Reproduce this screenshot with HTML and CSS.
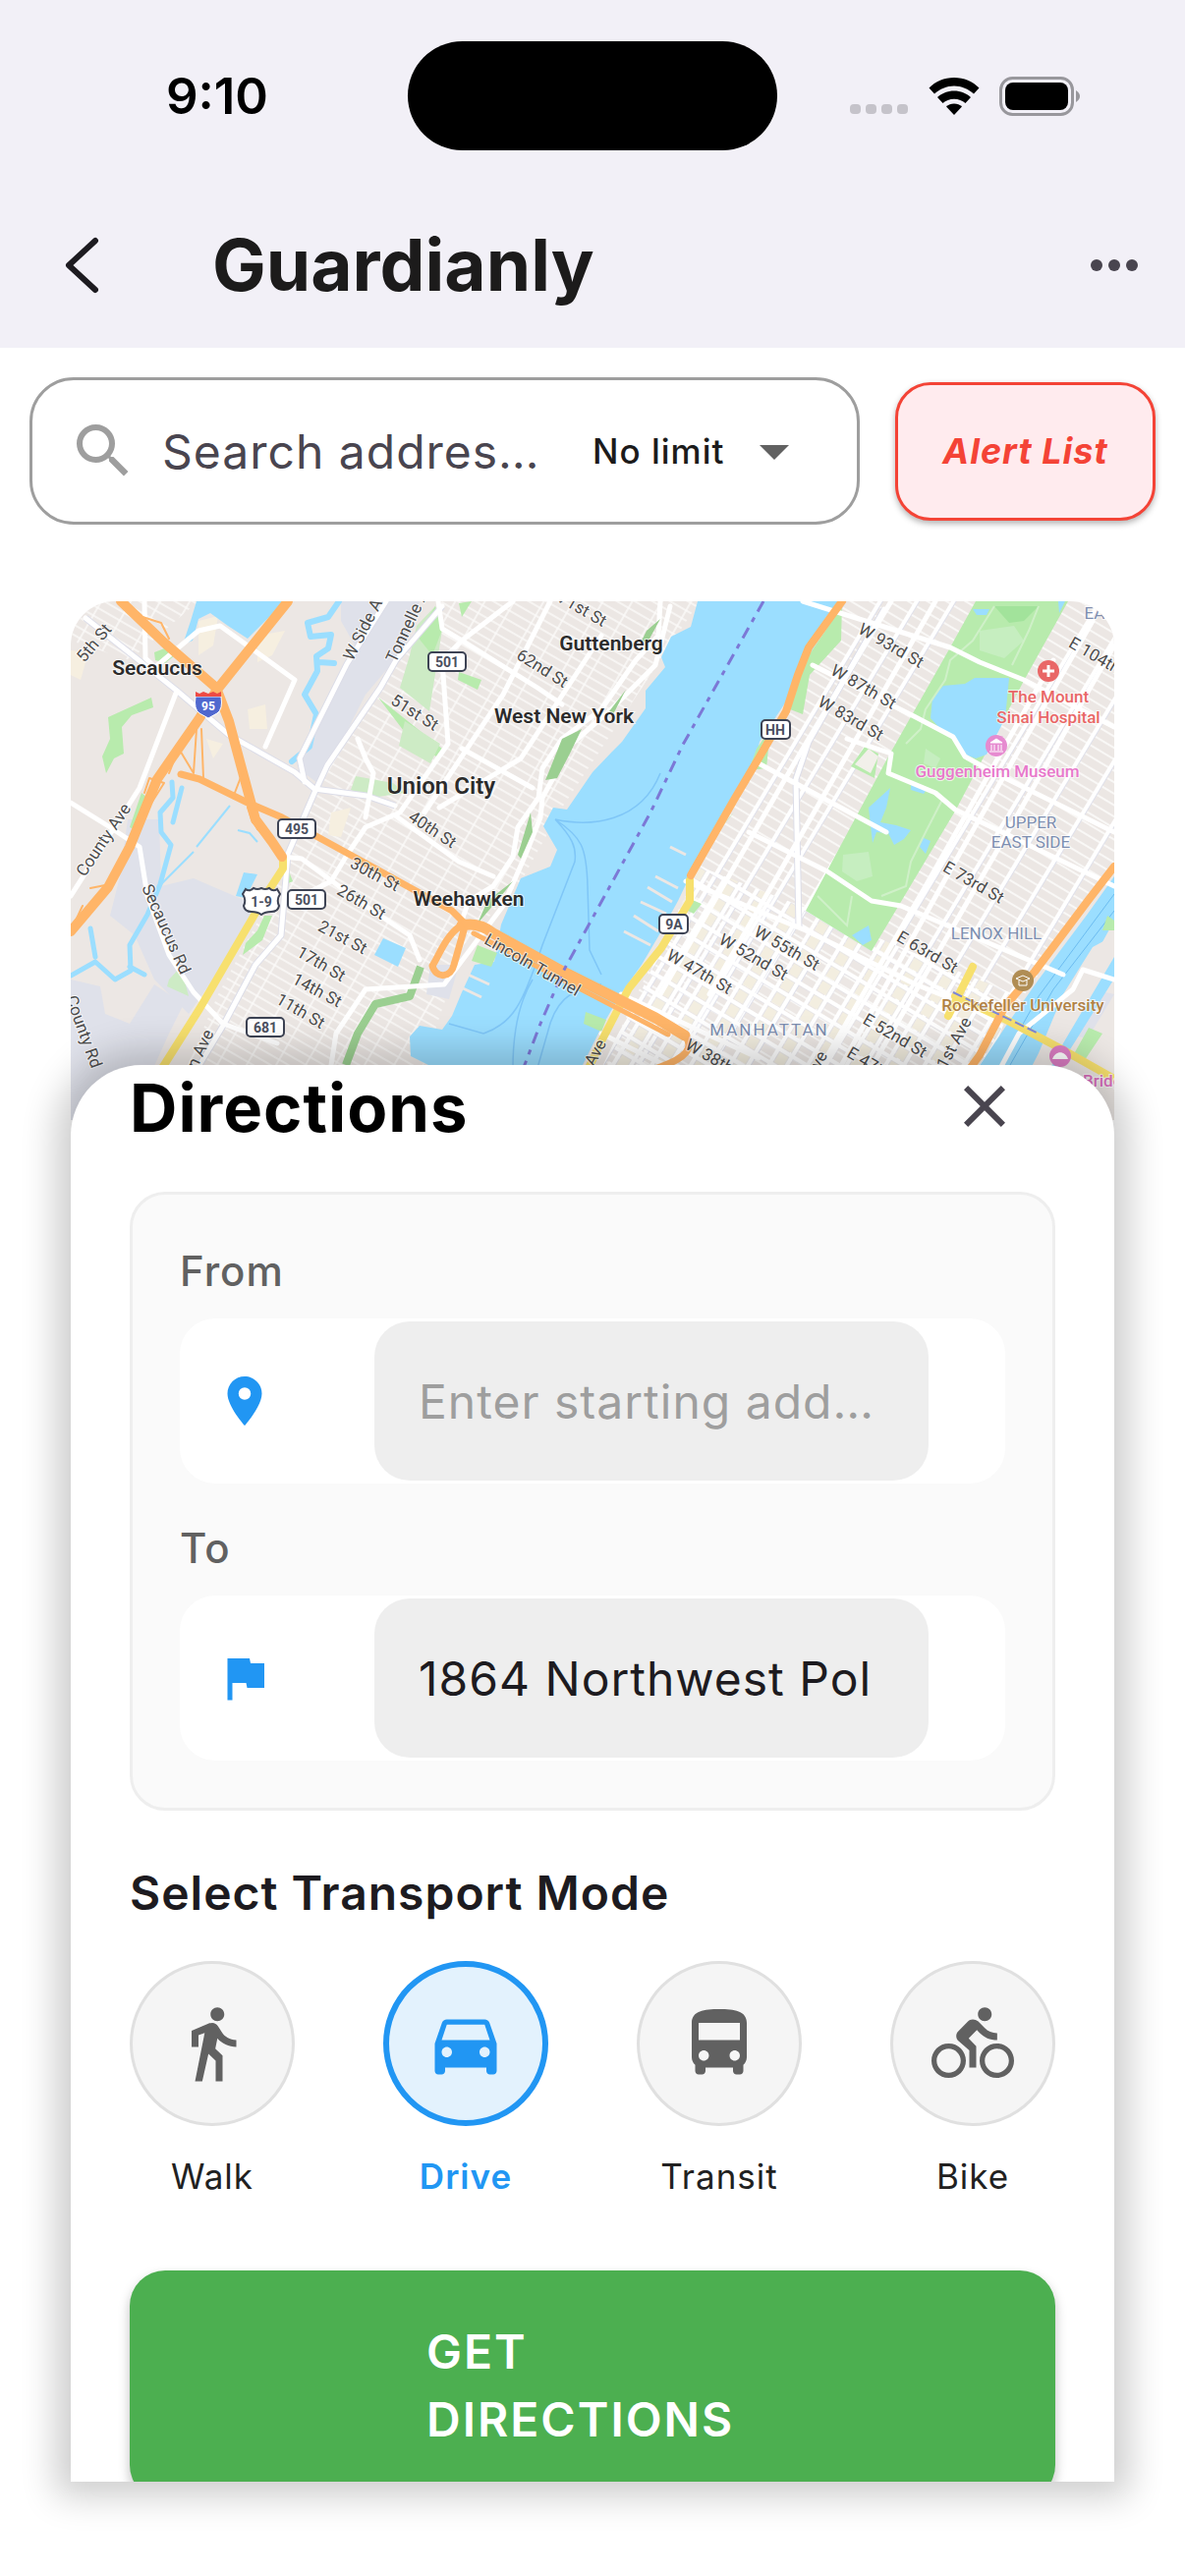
FILE: index.html
```html
<!DOCTYPE html>
<html lang="en">
<head>
    <meta charset="UTF-8">
    <meta name="viewport" content="width=device-width, initial-scale=1.0">
    <title>Guardianly</title>
    <link rel="stylesheet" href="styles.css">
</head>
<body>
    <header class="top">
        <div class="status-bar">
            <span class="time">9:10</span>
            <div class="island"></div>
            <div class="status-icons">
                <svg width="60" height="40" viewBox="0 0 60 40" fill="#c5c3ca">
                    <rect x="0" y="28" width="11" height="10" rx="4"/>
                    <rect x="16" y="28" width="11" height="10" rx="4"/>
                    <rect x="32" y="28" width="11" height="10" rx="4"/>
                    <rect x="48" y="28" width="11" height="10" rx="4"/>
                </svg>
                <svg width="52" height="40" viewBox="0 0 52 40">
                    <path d="M26 1C16 1 7 5 0.500 11.500L6 17.500C11.500 12.500 18.500 9.500 26 9.500S40.500 12.500 46 17.500L51.500 11.500C45 5 36 1 26 1Z"/>
                    <path d="M26 14.500C19.500 14.500 13.500 17 9 21L14.500 27C17.500 24.500 21.500 22.800 26 22.800S34.500 24.500 37.500 27L43 21C38.500 17 32.500 14.500 26 14.500Z"/>
                    <path d="M26 27.500C23 27.500 20 28.700 18 30.500L26 39L34 30.500C32 28.700 29 27.500 26 27.500Z"/>
                </svg>
                <svg width="82" height="40" viewBox="0 0 82 40">
                    <rect x="1.500" y="1.500" width="73" height="37" rx="12" fill="none" stroke="#98979c" stroke-width="3"/>
                    <rect x="6" y="6" width="64" height="28" rx="8"/>
                    <path d="M78 14C81 16 82 18 82 20S81 24 78 26Z" fill="#98979c"/>
                </svg>
            </div>
        </div>
        <div class="app-bar">
            <button class="icon-button" aria-label="Back">
                <svg width="72" height="72" viewBox="0 0 72 72" fill="none" stroke="#1d1b20" stroke-width="6" stroke-linecap="round" stroke-linejoin="round">
                    <path d="M49 11L22 36L49 61"/>
                </svg>
            </button>
            <h1>Guardianly</h1>
            <button class="icon-button" aria-label="More">
                <svg width="60" height="72" viewBox="0 0 60 72" fill="#49454f">
                    <circle cx="12" cy="36" r="6"/>
                    <circle cx="30" cy="36" r="6"/>
                    <circle cx="48" cy="36" r="6"/>
                </svg>
            </button>
        </div>
    </header>

    <div class="search-row">
        <div class="search-box">
            <svg width="72" height="72" viewBox="0 0 24 24" fill="#9e9e9e">
                <path d="M15.500 14h-.79l-.28-.27A6.471 6.471 0 0 0 16 9.500 6.500 6.500 0 1 0 9.500 16c1.610 0 3.090-.59 4.230-1.570l.27.28v.79l5 4.990L20.490 19l-4.990-5zm-6 0C7.010 14 5 11.990 5 9.500S7.010 5 9.500 5 14 7.010 14 9.500 11.990 14 9.500 14z"/>
            </svg>
            <input type="text" aria-label="Search address" placeholder="Search addres…">
            <select aria-label="Distance limit">
                <option>No limit</option>
            </select>
            <svg class="arrow" width="72" height="72" viewBox="0 0 24 24" fill="#616161">
                <path d="M7 10l5 5 5-5z"/>
            </svg>
        </div>
        <button class="alert-button">Alert List</button>
    </div>

    <main>
        <svg class="map" viewBox="0 0 1062 528" preserveAspectRatio="xMidYMin slice" role="img" aria-label="Map">
            <defs>
                <pattern id="gridNj" width="26" height="9" patternUnits="userSpaceOnUse" patternTransform="rotate(30)">
                    <path d="M0 1H26M1 0V9" stroke="#fbfaf9" stroke-width="1.500"/>
                </pattern>
                <pattern id="gridNy" width="32" height="10" patternUnits="userSpaceOnUse" patternTransform="rotate(31)">
                    <path d="M0 1H32" stroke="#fbfaf9" stroke-width="1.800"/>
                    <path d="M2 0V10" stroke="#dfe0ea" stroke-width="6"/>
                    <path d="M2 0V10" stroke="#fff" stroke-width="4"/>
                </pattern>
                <pattern id="gridMid" width="34" height="17" patternUnits="userSpaceOnUse" patternTransform="rotate(31)">
                    <rect x="5" y="4" width="12" height="12" fill="#f3eee0"/>
                    <path d="M0 2H34M2 0V17M18 0V17" stroke="#dfe0ea" stroke-width="5"/>
                    <path d="M0 2H34M2 0V17M18 0V17" stroke="#fff" stroke-width="4"/>
                </pattern>
            </defs>
            <rect width="1062" height="528" fill="#ece7e4"/>

            <!-- street grids -->
            <path d="M0 0H130L60 60L0 40Z" fill="url(#gridNj)"/>
            <path d="M378 0H640L600 60L500 210L460 282L400 350L340 528H95L150 400L215 280L250 190L330 60Z" fill="url(#gridNj)"/>
            <path d="M785 0H1062V270L950 430L900 528H515L600 350L690 175Z" fill="url(#gridNy)"/>
            <path d="M640 270L748 312L960 400L915 528H520L600 355Z" fill="url(#gridMid)"/>

            <!-- industrial areas -->
            <path fill="#dfe1ea" d="M275 0H355L338 50L300 95L272 150L255 188L234 172L240 145L270 90L292 50L275 20Z"/>
            <path fill="#dfe1ea" d="M58 222H90L92 290L125 282L190 310L155 370L120 420L85 385L65 340L40 320L50 280Z"/>
            <path fill="#dfe1ea" d="M0 385L30 392L35 420L60 430L85 390L115 410L100 440L60 528H0Z"/>
            <path fill="#dfe1ea" d="M366 370L395 370L385 405L362 400ZM1062 400L1035 445L1010 440L1040 395Z"/>
            <path fill="#f6efe0" d="M130 20L150 15L145 45L130 55ZM190 35L218 30L205 55L190 62ZM0 50L18 52L10 80L0 75ZM180 110L198 105L200 130L182 130ZM138 140L155 145L145 160ZM265 215L285 210L275 240L262 238Z"/>

            <!-- parks -->
            <path fill="#b8ebad" d="M85 52L98 47L106 55L96 63L86 60Z"/>
            <path fill="#b8ebad" d="M38 118L60 108L82 98L84 108L62 116L52 128L54 155L44 160L36 175L32 158L40 140Z"/>
            <path fill="#cdebc5" d="M371 5L378 29L365 112L335 88L345 55L352 25Z"/>
            <path fill="#b8ebad" d="M371 5L378 29L368 55L352 35ZM313 98L378 150L372 158L345 140ZM395 72L418 80L414 90L394 80ZM395 2L408 0L398 16Z"/>
            <path fill="#cdebc5" d="M340 122L376 145L366 165L334 147ZM290 178L328 185L340 195L306 200L285 192ZM100 385L112 372L120 402L98 392Z"/>
            <path fill="#b8ebad" d="M60 230L72 195L78 200L64 232ZM220 270L226 285L215 290ZM205 320L195 345L175 360L178 348L190 335L197 320Z"/>
            <path fill="none" stroke="#9bcf91" stroke-width="8" stroke-linejoin="round" d="M356 372L345 402L310 410L292 440L280 472"/>

            <!-- Hudson river and small waters -->
            <path fill="#9bdeff" d="M638 0L631 26L611 36L601 57L605 67L585 91L585 109L561 143L551 153L531 174L505 212L491 210L481 229L495 253L488 270L458 282L438 329L431 367L411 370L398 398L388 422L378 436L355 432L345 443L346 463L368 474L345 528H500L521 472L541 432L561 398L581 370L601 336L618 305L628 284L655 236L695 174L701 143L728 102L745 64L768 29L785 0Z"/>
            <path fill="#9bdeff" d="M128 0H218L180 38L160 25L142 12L130 18L124 40L114 44L122 20Z"/>
            <path fill="#9bdeff" d="M318 343L341 353L333 372L309 360ZM168 300L176 276L190 278L178 302Z"/>
            <path fill="none" stroke="#9bdeff" stroke-width="6" stroke-linejoin="round" stroke-linecap="round" d="M273 0L262 16L241 22L244 36L265 34L262 48L250 56L251 71L238 95L250 115L243 148L225 163M253 62L268 63"/>
            <path fill="none" stroke="#9bdeff" stroke-width="5" stroke-linejoin="round" stroke-linecap="round" d="M103 184L104 200L91 215L92 235L102 248L91 288L78 319L60 350L61 376L45 385L25 367L0 381M113 190L104 225M60 372L75 380M20 333L25 362"/>
            <path fill="none" stroke="#9bdeff" stroke-width="2" d="M92 288L125 255M128 250L162 208M170 233L182 236L190 245"/>
            <path fill="#b8ebad" d="M785 2L768 30L745 64L732 110L745 115L752 75L784 40ZM698 150L712 130L708 170L690 172ZM675 215L650 245L672 218ZM628 302L642 308L634 318L626 314ZM414 350L434 358L428 372L408 366ZM524 418L545 426L540 438L522 430Z"/>
            <path fill="none" stroke="#ece7e4" stroke-width="3" d="M610 250L626 258M595 280L618 292M587 291L612 306M580 306L606 318M573 320L598 336M563 336L590 350M400 378L426 390M395 392L418 403"/>
            <path fill="none" stroke="#7fc6f7" stroke-width="1.500" d="M493 222C530 230 580 225 600 175M493 222C510 240 515 250 513 265L480 350C460 410 450 430 420 440L385 430M493 222C520 240 525 250 526 290L528 355L540 380M540 390C505 395 492 410 485 440L475 475M470 385C455 410 450 440 450 475"/>

            <!-- East river -->
            <path fill="#9bdeff" d="M1062 280L1035 318L985 385L952 432L920 480L890 528H955L985 465L1010 410L1040 365L1062 325Z"/>
            <path fill="#9bdeff" d="M1062 343L1021 394L1001 446L975 490L995 490L1021 450L1062 384Z"/>
            <path fill="none" stroke="#6cbcf0" stroke-width="1" d="M1062 298L985 402L930 500M1062 315L1000 395L940 500"/>
            <path fill="#ece7e4" d="M1062 340L1040 352L1010 400L985 460L950 528H970L1010 450L1062 362Z"/>
            <path fill="#b8ebad" d="M1036 434L1050 440L1030 470L1018 466ZM1055 320L1062 325V335L1050 335Z"/>

            <!-- Central park -->
            <path fill="#b8ebad" d="M921 0H1015L971 79L901 212L815 356L748 315L831 160L895 47ZM808 148L822 155L818 180L794 168Z"/>
            <path fill="#c6eec0" d="M925 30L960 25L970 40L950 58L925 50ZM786 258L812 255L816 280L800 285L785 275ZM870 150L885 160L880 170L868 165Z"/>
            <path fill="#a2e39b" d="M940 5L985 5L970 20L955 22Z"/>
            <path fill="#f2f0ea" d="M812 150L822 158L814 175L798 166Z"/>
            <path fill="#9bdeff" d="M888 86L910 84L920 78L955 78L951 119L932 156L921 160L910 156L901 143L885 130L875 119L877 98Z"/>
            <path fill="#9bdeff" d="M812 210L823 200L834 190L830 210L824 225L840 228L855 233L848 242L838 248L832 236L820 235L816 246ZM866 240L875 244L870 257L864 250ZM855 183L872 190L868 196L855 192ZM795 340L812 330L815 345L806 350ZM918 8L935 8L932 14L922 14ZM1005 0L1012 0L1006 12Z"/>
            <path fill="none" stroke="#cff0c8" stroke-width="2" d="M940 5L918 40L895 60L890 80L870 110L865 130L850 145M888 200L870 235L855 265L850 290L825 300M760 300L790 330L795 300M985 5L975 30L958 65"/>

            <!-- local roads -->
            <g fill="none" stroke="#dcdde8" stroke-width="7" stroke-linejoin="round">
                <path d="M321 0L281 64L233 160L238 184M378 5L331 60L315 88L261 167L248 195L221 257L214 340L188 370L155 432L131 472"/>
                <path d="M15 17L68 59L108 91L161 136L228 174L248 191L301 198L330 208"/>
                <path d="M828 8L751 143L738 181L741 332"/>
            </g>
            <g fill="none" stroke="#fff" stroke-width="5" stroke-linejoin="round" stroke-linecap="round">
                <path d="M321 0L281 64L233 160L238 184M378 5L331 60L315 88L261 167L248 195L221 257L214 340L188 370L155 432L131 472"/>
                <path d="M15 17L68 59L108 91L161 136L228 174L248 191L301 198L330 208"/>
                <path d="M75 0L76 58L86 67L130 30L152 25L228 80L198 148M108 91L70 190L0 300M0 205L40 230L70 250L78 300L100 360L125 398L155 430L210 450"/>
                <path d="M374 0L378 28L398 40L475 88L500 105M450 0L398 40L378 60L384 145L335 215L300 230L280 260L265 285L235 300M292 140L300 160L308 175L300 220M488 0L440 95L360 215M600 0L598 35L575 60L540 110L500 140L480 170L476 200L455 230L450 260L430 290L405 305L398 325"/>
                <path d="M610 5L595 65L550 110L510 145L480 200L478 220L462 260L440 310L380 390L300 395L270 440L265 472M398 150L470 190M330 218L395 265L430 280M375 210L458 160L540 35M215 260L235 262L300 310L345 340L355 365"/>
                <path d="M828 8L751 143L738 181L741 332M745 0L895 47L925 62L970 80L1062 128M755 65L860 118L898 138L910 158L935 172L1062 235M790 140L835 155L832 175L880 195L900 212L1062 290M700 165L830 235M690 235L770 275L815 305L845 310L1010 380M626 285L748 335L860 390L960 430"/>
                <path d="M1000 60L870 290L760 480M1040 20L900 265L780 480M1062 45L945 250L800 500M880 0L650 400M835 0L745 150L600 400M540 440L640 490M560 400L700 465"/>
                <path d="M930 505L965 440L1020 395L1030 375L1062 385"/>
            </g>

            <!-- cliffs along the river -->
            <path fill="#9bcf91" d="M520 130L500 140L486 175L483 182L495 180L508 155ZM468 215L470 235L458 262L455 258ZM450 285L438 300L414 328L424 305ZM600 18L588 40L580 42L586 30ZM565 90L552 115L548 112Z"/>

            <!-- highways -->
            <g fill="none" stroke-linejoin="round" stroke-linecap="round">
                <path stroke="#f7e06e" stroke-width="8" d="M216 262L216 272L201 295L131 415L95 472L70 510M630 284L630 305L601 353L568 394L541 446L515 500M918 372L893 422M900 402L950 425L1007 455L1062 486"/>
                <g stroke="#ffb568">
                    <path stroke-width="10" d="M51 0L95 42L148 88L161 122L175 174L188 222L205 245L215 260M221 0L148 91L131 119L88 181L60 250L38 291L0 336"/>
                    <path stroke-width="7" d="M112 176L131 181L180 205L215 220L288 260L388 315L400 327"/>
                    <path stroke-width="11" d="M398 330Q415 326 430 338L501 377L595 424L625 442"/>
                    <path stroke-width="5" d="M410 338L500 385L608 441"/>
                    <path stroke-width="7" d="M396 331C382 340 374 362 368 371C372 385 387 383 390 370L400 335M625 442Q640 460 600 474L560 492"/>
                    <path stroke-width="8" d="M785 0L751 47L740 75L728 112L700 160L675 202L631 279M1062 270L1035 305L981 377L951 412L925 462L890 510"/>
                    <path stroke-width="2" d="M70 15L92 22L100 38M128 130L125 175L110 150L100 175M133 130L135 180M75 195L80 180L95 185L60 240M175 174L165 200L195 210M180 210L185 225L205 240L190 232ZM40 288L20 292M12 310L5 325M388 372L382 382"/>
                </g>
            </g>
            <path fill="none" stroke="#7c78d6" stroke-width="3" stroke-dasharray="12 7 5 7" d="M705 0L623 146L590 215L501 377L478 430L455 490"/>
            <path fill="none" stroke="#7c86d8" stroke-width="2" stroke-dasharray="10 4" d="M898 398L985 440"/>

            <!-- street names -->
            <g class="street">
                <text transform="translate(28 46) rotate(-50)">5th St</text>
                <text transform="translate(38 246) rotate(-56)">County Ave</text>
                <text transform="translate(92 336) rotate(66)">Secaucus Rd</text>
                <text transform="translate(8 440) rotate(70)">County Rd</text>
                <text transform="translate(306 24) rotate(-63)">W Side Ave</text>
                <text transform="translate(351 20) rotate(-65)">Tonnelle Ave</text>
                <text transform="translate(347 118) rotate(32)">51st St</text>
                <text transform="translate(365 237) rotate(33)">40th St</text>
                <text transform="translate(307 283) rotate(28)">30th St</text>
                <text transform="translate(293 311) rotate(30)">26th St</text>
                <text transform="translate(274 347) rotate(28)">21st St</text>
                <text transform="translate(252 374) rotate(30)">17th St</text>
                <text transform="translate(248 401) rotate(28)">14th St</text>
                <text transform="translate(231 422) rotate(30)">11th St</text>
                <text transform="translate(137 458) rotate(-65)">n Ave</text>
                <text transform="translate(518 13) rotate(30)">71st St</text>
                <text transform="translate(477 73) rotate(32)">62nd St</text>
                <text transform="translate(467 375) rotate(30)">Lincoln Tunnel</text>
                <text transform="translate(637 382) rotate(30)">W 47th St</text>
                <text transform="translate(692 367) rotate(30)">W 52nd St</text>
                <text transform="translate(726 358) rotate(30)">W 55th St</text>
                <text transform="translate(656 473) rotate(30)">W 38th St</text>
                <text transform="translate(539 462) rotate(-62)">Ave</text>
                <text transform="translate(832 50) rotate(30)">W 93rd St</text>
                <text transform="translate(804 92) rotate(30)">W 87th St</text>
                <text transform="translate(791 124) rotate(30)">W 83rd St</text>
                <text transform="translate(1048 65) rotate(30)">E 104th St</text>
                <text transform="translate(916 291) rotate(30)">E 73rd St</text>
                <text transform="translate(869 362) rotate(30)">E 63rd St</text>
                <text transform="translate(836 447) rotate(30)">E 52nd St</text>
                <text transform="translate(818 480) rotate(30)">E 47th St</text>
                <text transform="translate(904 452) rotate(-62)">1st Ave</text>
                <text transform="translate(764 474) rotate(-62)">Ave</text>
            </g>

            <!-- places -->
            <g class="town">
                <text x="88" y="75">Secaucus</text>
                <text x="550" y="50">Guttenberg</text>
                <text x="502" y="124">West New York</text>
                <text class="city" x="377" y="196">Union City</text>
                <text x="405" y="310">Weehawken</text>
            </g>
            <g class="district">
                <text x="977" y="231">UPPER</text>
                <text x="977" y="251">EAST SIDE</text>
                <text x="942" y="344">LENOX HILL</text>
                <text class="wide" x="711" y="442">MANHATTAN</text>
                <text x="1042" y="18">EA</text>
            </g>
            <g class="poi">
                <circle cx="995" cy="71" r="11" fill="#e96767"/>
                <path d="M995 65V77M989 71H1001" stroke="#fff" stroke-width="3"/>
                <text x="995" y="103" fill="#e96767">The Mount</text>
                <text x="995" y="124" fill="#e96767">Sinai Hospital</text>
                <circle cx="942" cy="147" r="11" fill="#e68bd0"/>
                <path d="M936 144L942 140L948 144ZM937 146V152M940 146V152M944 146V152M947 146V152M935 153H949" stroke="#fff" fill="#fff"/>
                <text x="943" y="179" fill="#e878cb">Guggenheim Museum</text>
                <circle cx="969" cy="386" r="11" fill="#b08d54"/>
                <path d="M962 384L969 381L976 384L969 387ZM965 386V391H973V386" stroke="#fff" fill="none"/>
                <text x="969" y="417" fill="#b08145">Rockefeller University</text>
                <circle cx="1007" cy="463" r="11" fill="#dd7ec4"/>
                <path d="M999 466C1002 457 1012 457 1015 466Z" fill="#fff"/>
                <text class="start" x="1030" y="494" fill="#dd70c0">Bridge</text>
            </g>

            <!-- route shields -->
            <g class="shield">
                <rect x="364" y="52" width="38" height="19" rx="4"/><text x="383" y="67">501</text>
                <rect x="211" y="222" width="38" height="19" rx="4"/><text x="230" y="237">495</text>
                <rect x="221" y="294" width="38" height="19" rx="4"/><text x="240" y="309">501</text>
                <rect x="179" y="424" width="38" height="19" rx="4"/><text x="198" y="439">681</text>
                <rect x="703" y="121" width="29" height="19" rx="4"/><text x="717" y="136">HH</text>
                <rect x="599" y="319" width="29" height="19" rx="4"/><text x="614" y="334">9A</text>
                <path d="M178 293Q182 296 186 292Q190 294 194 292Q198 294 202 292Q206 296 210 293L213 298Q209 304 212 310Q211 316 204 316Q198 316 194 319Q190 316 184 316Q177 316 176 310Q179 304 175 298Z"/><text x="194" y="311">1-9</text>
            </g>
            <path d="M127 97H153Q155 110 149 114L140 119L131 114Q125 110 127 97Z" fill="#5068cf" stroke="#fff"/>
            <path d="M127 97V92L131 94L135 92L140 94L145 92L149 94L153 92V97Z" fill="#ee4a44"/>
            <text class="interstate" x="140" y="111">95</text>
        </svg>

        <section class="sheet">
            <div class="sheet-header">
                <h2>Directions</h2>
                <button class="icon-button" aria-label="Close">
                    <svg width="72" height="72" viewBox="0 0 24 24" fill="#49454f">
                        <path d="M19 6.410L17.590 5 12 10.590 6.410 5 5 6.410 10.590 12 5 17.590 6.410 19 12 13.410 17.590 19 19 17.590 13.410 12z"/>
                    </svg>
                </button>
            </div>

            <div class="address-card">
                <label for="from">From</label>
                <div class="address-row">
                    <svg width="60" height="60" viewBox="0 0 24 24" fill="#2196f3">
                        <path d="M12 2C8.130 2 5 5.130 5 9c0 5.250 7 13 7 13s7-7.750 7-13c0-3.870-3.130-7-7-7zm0 9.500a2.500 2.500 0 0 1 0-5 2.500 2.500 0 0 1 0 5z"/>
                    </svg>
                    <input type="text" id="from" placeholder="Enter starting add…">
                </div>
                <label for="to">To</label>
                <div class="address-row">
                    <svg width="60" height="60" viewBox="0 0 24 24" fill="#2196f3">
                        <path d="M14.400 6L14 4H5v17h2v-7h5.600l.4 2h7V6z"/>
                    </svg>
                    <input type="text" id="to" value="1864 Northwest Pol">
                </div>
            </div>

            <h3>Select Transport Mode</h3>
            <div class="modes">
                <button class="mode">
                    <span class="mode-icon">
                        <svg width="84" height="84" viewBox="0 0 24 24">
                            <path d="M13.500 5.500c1.100 0 2-.9 2-2s-.9-2-2-2-2 .9-2 2 .9 2 2 2zM9.800 8.900L7 23h2.100l1.800-8 2.100 2v6h2v-7.500l-2.100-2 .6-3C14.800 12 16.800 13 19 13v-2c-1.900 0-3.500-1-4.300-2.400l-1-1.600c-.4-.6-1-1-1.700-1-.3 0-.5.1-.8.1L6 8.300V13h2V9.600l1.800-.7"/>
                        </svg>
                    </span>
                    Walk
                </button>
                <button class="mode selected">
                    <span class="mode-icon">
                        <svg width="84" height="84" viewBox="0 0 24 24">
                            <path d="M18.920 6.010C18.720 5.420 18.160 5 17.500 5h-11c-.66 0-1.210.42-1.420 1.010L3 12v8c0 .55.450 1 1 1h1c.55 0 1-.45 1-1v-1h12v1c0 .55.450 1 1 1h1c.55 0 1-.45 1-1v-8l-2.080-5.990zM6.500 16c-.83 0-1.500-.67-1.500-1.500S5.670 13 6.500 13s1.500.67 1.500 1.500S7.330 16 6.500 16zm11 0c-.83 0-1.500-.67-1.500-1.500s.67-1.500 1.500-1.500 1.500.67 1.500 1.500-.67 1.500-1.500 1.500zM5 11l1.500-4.500h11L19 11H5z"/>
                        </svg>
                    </span>
                    Drive
                </button>
                <button class="mode">
                    <span class="mode-icon">
                        <svg width="84" height="84" viewBox="0 0 24 24">
                            <path d="M4 16c0 .88.390 1.670 1 2.220V20c0 .55.450 1 1 1h1c.55 0 1-.45 1-1v-1h8v1c0 .55.450 1 1 1h1c.55 0 1-.45 1-1v-1.780c.61-.55 1-1.340 1-2.220V6c0-3.500-3.580-4-8-4s-8 .5-8 4v10zm3.500 1c-.83 0-1.500-.67-1.500-1.500S6.670 14 7.500 14s1.500.67 1.500 1.500S8.330 17 7.500 17zm9 0c-.83 0-1.500-.67-1.500-1.500s.67-1.500 1.500-1.500 1.500.67 1.500 1.500-.67 1.500-1.500 1.500zm1.500-6H6V6h12v5z"/>
                        </svg>
                    </span>
                    Transit
                </button>
                <button class="mode">
                    <span class="mode-icon">
                        <svg width="84" height="84" viewBox="0 0 24 24">
                            <path d="M15.500 5.500c1.100 0 2-.9 2-2s-.9-2-2-2-2 .9-2 2 .9 2 2 2zM5 12c-2.800 0-5 2.200-5 5s2.200 5 5 5 5-2.200 5-5-2.200-5-5-5zm0 8.500c-1.900 0-3.500-1.600-3.500-3.500s1.600-3.500 3.500-3.500 3.500 1.600 3.500 3.500-1.600 3.500-3.500 3.500zm5.800-10l2.400-2.400.8.8c1.300 1.300 3 2.100 5.100 2.100V9c-1.500 0-2.700-.6-3.600-1.500l-1.900-1.900c-.5-.4-1-.6-1.600-.6s-1.100.2-1.400.6L7.800 8.400c-.4.4-.6.9-.6 1.400 0 .6.200 1.100.6 1.400L11 14v5h2v-6.200l-2.200-2.300zM19 12c-2.800 0-5 2.200-5 5s2.200 5 5 5 5-2.200 5-5-2.200-5-5-5zm0 8.500c-1.900 0-3.500-1.600-3.500-3.500s1.600-3.500 3.500-3.500 3.500 1.600 3.500 3.500-1.600 3.500-3.500 3.500z"/>
                        </svg>
                    </span>
                    Bike
                </button>
            </div>

            <button class="go-button"><span>GET DIRECTIONS</span></button>
        </section>
    </main>
</body>
</html>
```

FILE: styles.css
```css
* {
    box-sizing: border-box;
}
body {
    margin: 0;
    height: 100vh;
    display: flex;
    flex-direction: column;
    background-color: #fff;
    color: #1d1b20;
    font-family: Inter, "Liberation Sans", sans-serif;
}
h1, h2, h3 {
    margin: 0;
}
svg {
    display: block;
    flex-shrink: 0;
}
button, input, select {
    font-family: inherit;
    letter-spacing: inherit;
    color: inherit;
    margin: 0;
    padding: 0;
    border: none;
    background: none;
}
button {
    cursor: pointer;
}

/* header */
.top {
    background-color: #f2f0f7;
    padding: 42px 0;
}
.status-bar {
    display: grid;
    grid-template-columns: 1fr 376px 1fr;
    align-items: center;
}
.time {
    justify-self: end;
    margin-right: 142px;
    color: #000;
    font-size: 51px;
    font-weight: 600;
}
.island {
    height: 111px;
    border-radius: 56px;
    background-color: #000;
}
.status-icons {
    display: flex;
    gap: 20px;
    margin-left: 74px;
}
.app-bar {
    display: flex;
    align-items: center;
    padding: 75px 42px 0 48px;
}
.app-bar h1 {
    flex: 1;
    margin-left: 96px;
    color: #1c1b1b;
    font-size: 73px;
    line-height: 84px;
    font-weight: 700;
}

/* search */
.search-row {
    display: flex;
    align-items: center;
    gap: 36px;
    padding: 30px 30px 78px;
    letter-spacing: 1px;
}
.search-box {
    flex: 1;
    min-width: 0;
    height: 150px;
    display: flex;
    align-items: center;
    padding: 0 48px 0 36px;
    border: 3px solid #9e9e9e;
    border-radius: 45px;
}
.search-box input {
    flex: 1;
    min-width: 0;
    margin: 0 24px;
    font-size: 48px;
    outline: none;
}
.search-box input::placeholder {
    color: #49454f;
    opacity: 1;
}
.search-box select {
    appearance: none;
    color: #1c1b1b;
    font-size: 35px;
    font-weight: 500;
}
.arrow {
    margin-left: 14px;
}
.alert-button {
    width: 265px;
    height: 141px;
    border: 3px solid #f44336;
    border-radius: 36px;
    background-color: #ffebee;
    box-shadow: 0 3px 6px rgba(0, 0, 0, 0.3);
    color: #f44336;
    font-size: 36px;
    font-weight: 700;
    font-style: italic;
}

/* map */
main {
    flex: 1;
    min-height: 0;
    display: flex;
    flex-direction: column;
    padding: 0 72px 96px;
}
.map {
    width: 100%;
    height: 528px;
    border-radius: 45px 45px 0 0;
    font-family: Roboto, "Noto Sans", sans-serif;
}
.map text {
    text-anchor: middle;
    paint-order: stroke;
    stroke: #fff;
    stroke-width: 2px;
    stroke-opacity: 0.7;
}
.map .start {
    text-anchor: start;
}
.map .street {
    font-size: 17px;
    fill: #4c4c4c;
}
.map .town {
    font-size: 21px;
    font-weight: 600;
    fill: #2b2b2b;
}
.map .city {
    font-size: 24px;
}
.map .district {
    font-size: 17px;
    fill: #7d8eb0;
}
.map .wide {
    letter-spacing: 2px;
}
.map .poi {
    font-size: 17px;
    font-weight: 500;
}
.map .shield {
    font-size: 14px;
    font-weight: 700;
    fill: #fff;
    stroke: #3d4354;
    stroke-width: 2px;
}
.map .shield text {
    fill: #4a4f5e;
    stroke: none;
}
.map .interstate {
    font-size: 12px;
    font-weight: 700;
    fill: #fff;
    stroke: none;
}

/* directions sheet */
.sheet {
    position: relative;
    flex: 1;
    min-height: 0;
    overflow: hidden;
    margin-top: -56px;
    padding: 0 60px;
    border-radius: 72px 72px 0 0;
    background-color: #fff;
    box-shadow: 0 0 36px 15px rgba(0, 0, 0, 0.2);
    letter-spacing: 1px;
}
.sheet-header {
    display: flex;
    justify-content: space-between;
    align-items: center;
    height: 84px;
    margin-bottom: 45px;
    padding-right: 36px;
}
.sheet-header h2 {
    color: #000;
    font-size: 67px;
    line-height: 84px;
    padding-top: 4px;
    font-weight: 700;
}
.address-card {
    padding: 48px;
    border: 3px solid #eee;
    border-radius: 36px;
    background-color: #fafafa;
}
.address-card label {
    display: block;
    margin-bottom: 18px;
    color: #616161;
    font-size: 42px;
    line-height: 60px;
    font-weight: 500;
}
.address-row {
    display: flex;
    align-items: center;
    justify-content: space-between;
    height: 168px;
    padding: 3px 78px 3px 36px;
    border-radius: 36px;
    background-color: #fff;
}
.address-row + label {
    margin-top: 36px;
}
.address-row input {
    width: 564px;
    height: 100%;
    padding: 0 45px;
    border-radius: 36px;
    background-color: #eee;
    font-size: 48px;
}
.address-row input::placeholder {
    color: #9e9e9e;
    opacity: 1;
}
.sheet h3 {
    margin: 54px 0 39px;
    font-size: 48px;
    line-height: 60px;
    font-weight: 600;
}
.modes {
    display: flex;
    justify-content: space-between;
}
.mode {
    display: flex;
    flex-direction: column;
    align-items: center;
    gap: 24px;
    width: 168px;
    color: #212121;
    font-size: 35px;
    line-height: 54px;
}
.mode-icon {
    display: flex;
    align-items: center;
    justify-content: center;
    width: 168px;
    height: 168px;
    border: 3px solid #e0e0e0;
    border-radius: 50%;
    background-color: #f5f5f5;
    fill: #616161;
}
.selected {
    color: #2196f3;
    font-weight: 600;
}
.selected .mode-icon {
    border: 6px solid #2196f3;
    background-color: #e3f2fd;
    fill: #2196f3;
}
.go-button {
    display: block;
    width: 100%;
    margin-top: 69px;
    padding: 48px;
    border-radius: 36px;
    background-color: #4caf50;
    box-shadow: 0 6px 12px rgba(0, 0, 0, 0.25);
    color: #fff;
    font-size: 48px;
    line-height: 69px;
    font-weight: 600;
    letter-spacing: 2px;
}
.go-button span {
    display: block;
    max-width: 338px;
    margin: 0 auto;
    text-align: left;
}
```
